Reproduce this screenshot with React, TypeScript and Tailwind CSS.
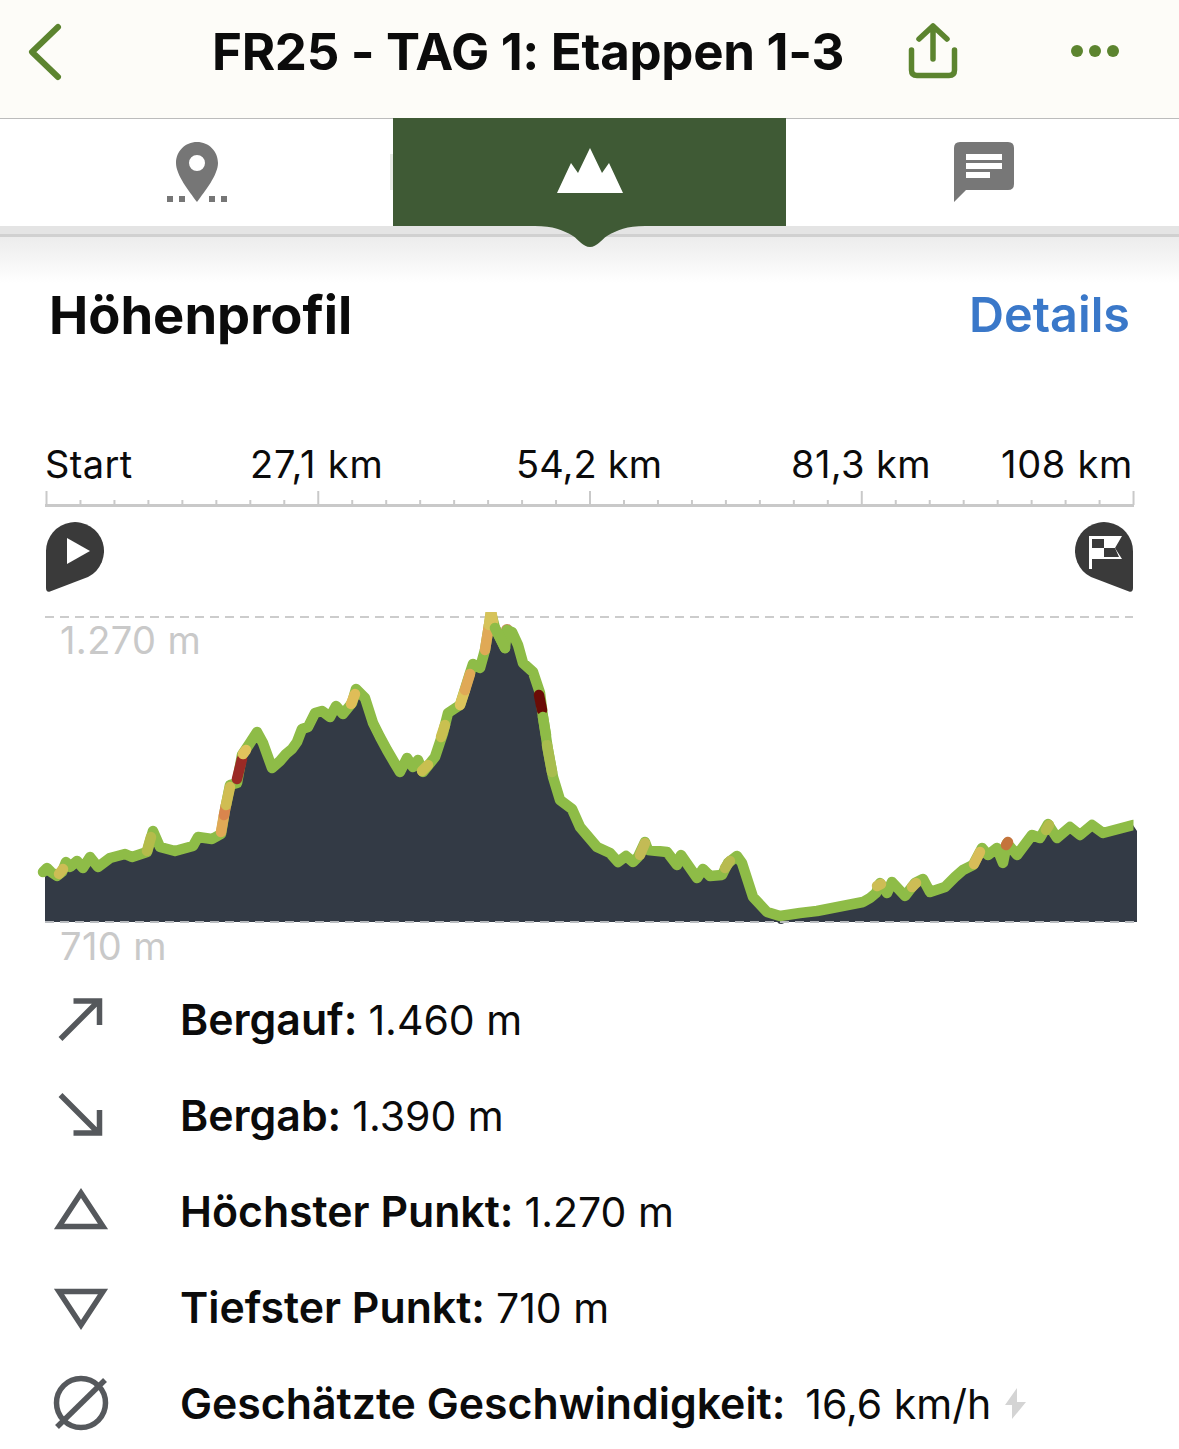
import React from "react";

type Pt = [number, number];

const LINE: Pt[] = [
  [43,872],[47,868],[51,872],[57,876],[62,872],[66,862],[70,867],[77,861],[83,868],[90,857],[98,867],[110,858],[125,854],[132,857],[147,852],[153,831],[160,847],[175,851],[193,846],[198,837],[212,839],[221,834],[225,810],[230,785],[237,783],[242,755],[250,743],[257,732],[263,743],[272,768],[280,761],[286,754],[292,749],[297,742],[302,729],[308,727],[315,713],[322,711],[330,717],[336,706],[343,714],[352,703],[356,689],[365,698],[373,723],[380,737],[387,750],[394,762],[400,772],[407,758],[413,767],[418,760],[423,772],[435,757],[443,733],[448,713],[460,705],[470,673],[473,664],[480,668],[485,650],[491,613],[495,628],[505,648],[507,630],[512,632],[518,645],[523,663],[533,672],[540,693],[543,717],[548,750],[553,777],[560,800],[572,809],[580,827],[597,847],[610,853],[618,862],[626,856],[633,862],[638,857],[645,842],[648,850],[667,852],[677,865],[681,855],[697,878],[703,869],[710,876],[722,875],[728,863],[737,856],[742,863],[753,897],[767,912],[780,916],[800,913],[817,911],[863,902],[870,898],[876,893],[880,883],[887,893],[892,882],[905,896],[915,883],[923,879],[930,892],[945,887],[955,877],[963,870],[973,865],[982,848],[988,855],[997,848],[1003,863],[1007,843],[1017,855],[1032,835],[1040,838],[1048,824],[1057,838],[1070,827],[1080,835],[1092,825],[1103,833],[1133,825],
];

const SEGMENTS: { color: string; pts: Pt[] }[] = [
  { color: "#cdbd55", pts: [[59,874],[63,869]] },
  { color: "#b4bc4b", pts: [[147,851],[151,837]] },
  { color: "#e0a956", pts: [[221,832],[224,815]] },
  { color: "#d9854d", pts: [[224,815],[226,805]] },
  { color: "#d0bd52", pts: [[226,805],[230,787]] },
  { color: "#9b2a25", pts: [[237,779],[242,759]] },
  { color: "#e0c35c", pts: [[243,754],[246,750]] },
  { color: "#dfbd58", pts: [[351,704],[355,694]] },
  { color: "#c9c050", pts: [[422,771],[428,765]] },
  { color: "#c9c050", pts: [[441,737],[445,725]] },
  { color: "#dcc45b", pts: [[460,705],[465,690]] },
  { color: "#e0a956", pts: [[465,690],[470,674]] },
  { color: "#e0a956", pts: [[485,650],[489,625]] },
  { color: "#d6c35a", pts: [[489,625],[491,610],[493,622]] },
  { color: "#6a0c06", pts: [[539,695],[542,710]] },
  { color: "#a8bd4e", pts: [[547,745],[552,772]] },
  { color: "#c3bb55", pts: [[640,855],[645,843]] },
  { color: "#b8bb50", pts: [[725,868],[730,861]] },
  { color: "#cdbd55", pts: [[877,886],[881,884]] },
  { color: "#cdbd55", pts: [[912,887],[916,883]] },
  { color: "#d8bd58", pts: [[974,864],[980,852]] },
  { color: "#c4743c", pts: [[1006,845],[1008,842]] },
  { color: "#b4bc4b", pts: [[1046,830],[1049,825]] },
];

const toPoints = (pts: Pt[]) => pts.map((p) => p.join(",")).join(" ");

const STATS = [
  { label: "Bergauf:", value: "1.460 m", icon: "up" },
  { label: "Bergab:", value: "1.390 m", icon: "down" },
  { label: "Höchster Punkt:", value: "1.270 m", icon: "high" },
  { label: "Tiefster Punkt:", value: "710 m", icon: "low" },
];

const StatIcon = ({ icon }: { icon: string }) => (
  <svg width="60" height="60" viewBox="0 0 60 60" fill="none" stroke="#55585c" strokeWidth="5.5">
    {icon === "up" && <path d="M9.5 49 L47.5 11 M22.5 11 H48.5 V35" />}
    {icon === "down" && <path d="M9.5 9 L47.5 47 M22.5 47 H48.5 V24" />}
    {icon === "high" && <path d="M30 11 L8 44.5 H52 Z" />}
    {icon === "low" && <path d="M8 13.5 H52 L30 47 Z" />}
    {icon === "avg" && (
      <>
        <circle cx="30" cy="29" r="24.5" />
        <path d="M6 53 L54 6" />
      </>
    )}
  </svg>
);

const App = () => {
  return (
    <div className="relative w-[1179px] h-[1449px] overflow-hidden bg-white font-[Inter,sans-serif] text-[#0b0b0b]">
      {/* nav bar */}
      <div className="flex h-[119px] items-start border-b border-[#bcbcbc] bg-[#fdfcf8]">
        <svg className="mt-[22px] ml-[26px] shrink-0" width="40" height="60" viewBox="0 0 40 60" fill="none" stroke="#5c842f" strokeWidth="6" strokeLinecap="round" strokeLinejoin="round">
          <path d="M32 5 L6 30 L32 55" />
        </svg>
        <div className="ml-[146px] mt-[23px] w-[632px] whitespace-nowrap text-center text-[51px] leading-[58px] font-bold tracking-[-0.3px]">
          FR25 - TAG 1: Etappen 1-3
        </div>
        <svg className="mt-[22px] ml-[63px] shrink-0" width="52" height="58" viewBox="0 0 52 58" fill="none" stroke="#5c842f" strokeWidth="5.5" strokeLinecap="round" strokeLinejoin="round">
          <path d="M26 4 V37 M12 17 L26 4 L40 17" />
          <path d="M4.5 28 V48 Q4.5 53.5 10 53.5 H42 Q47.5 53.5 47.5 48 V28" />
        </svg>
        <svg className="mt-[40px] ml-[110px] shrink-0" width="52" height="22" viewBox="0 0 52 22" fill="#5c842f">
          <circle cx="8" cy="11" r="6" />
          <circle cx="26" cy="11" r="6" />
          <circle cx="44" cy="11" r="6" />
        </svg>
      </div>

      {/* tabs */}
      <div className="flex h-[107px]">
        <div className="relative flex w-[393px] items-start justify-center pt-[23px] pl-[1px]">
          <svg width="64" height="60" viewBox="0 0 64 60" fill="#767676">
            <path fillRule="evenodd" d="M32 0 C44 0 53 9.5 53 21 C53 33 40 49 32 60 C24 49 11 33 11 21 C11 9.5 20 0 32 0 Z M32 13 A8 8 0 1 0 32 29 A8 8 0 1 0 32 13 Z" />
            <rect x="2" y="54" width="6" height="6" />
            <rect x="14" y="54" width="6" height="6" />
            <rect x="44" y="54" width="6" height="6" />
            <rect x="56" y="54" width="6" height="6" />
          </svg>
          <div className="absolute right-0 top-[35px] h-[36px] w-[3px] bg-[#e8ebe6]" />
        </div>
        <div className="-mt-px flex h-[108px] w-[393px] items-start justify-center bg-[#3f5a35] pt-[30px]">
          <svg width="66" height="45" viewBox="0 0 66 45" fill="#ffffff">
            <path d="M0 45 L14 15 L21 25 L33 0 L45 25 L52 15 L66 45 Z" />
          </svg>
        </div>
        <div className="flex flex-1 items-start justify-center pt-[23px] pl-[3px]">
          <svg width="60" height="60" viewBox="0 0 60 60" fill="#777777">
            <path d="M6 0 H54 Q60 0 60 6 V42 Q60 48 54 48 H12 L0 60 V6 Q0 0 6 0 Z" />
            <rect x="12" y="12" width="36" height="6" fill="#ffffff" />
            <rect x="12" y="21" width="36" height="6" fill="#ffffff" />
            <rect x="12" y="30" width="24" height="6" fill="#ffffff" />
          </svg>
        </div>
      </div>

      {/* shadow strip under the tabs */}
      <div className="h-[8px] bg-[#e4e4e4]" />
      <div className="h-[3px] bg-[#d0d0d0]" />
      <div className="h-[46px] bg-gradient-to-b from-[#ececec] to-white" />
      <svg className="absolute left-[535px] top-[226px]" width="110" height="21" viewBox="0 0 110 21" fill="#3f5a35">
        <path d="M0 0 H110 C92 0 82 4 72 10 C66 14 62 21 55 21 C48 21 44 14 38 10 C28 4 18 0 0 0 Z" />
      </svg>

      {/* heading */}
      <div className="flex items-center justify-between pl-[49px] pr-[49px] h-[64px]">
        <div className="text-[52.5px] leading-[60px] font-bold">Höhenprofil</div>
        <div className="text-[48.5px] leading-[54px] font-semibold text-[#3a78c9]">Details</div>
      </div>

      {/* axis labels */}
      <div className="mt-[95px] flex h-[44px] items-center pl-[45px] text-[38px] leading-[44px] tracking-[0.4px] whitespace-nowrap">
        <span className="w-[86px]">Start</span>
        <span className="ml-[119px] w-[132px] tracking-[0.8px]">27,1 km</span>
        <span className="ml-[134px] w-[145px] tracking-[0.1px]">54,2 km</span>
        <span className="ml-[130px] w-[139px]">81,3 km</span>
        <span className="ml-[71px] w-[130px] tracking-[0.7px]">108 km</span>
      </div>

      {/* ruler */}
      <svg className="mt-[3px] block" width="1179" height="20" viewBox="0 489 1179 20" stroke="#c9c9c9" fill="none">
        <path d="M45 505.5 H1134" strokeWidth="3" />
        {Array.from({ length: 33 }).map((_, i) => {
          const x = 46.5 + i * 33.97;
          return <path key={i} d={i % 8 === 0 ? `M${x} 491 V505` : `M${x} 500 V505`} strokeWidth="2" />;
        })}
      </svg>

      {/* start and finish markers */}
      <div className="mt-[13px] flex h-[70px] justify-between pl-[46px] pr-[46px]">
        <svg width="58" height="70" viewBox="46 522 58 70">
          <path d="M46 551 A29 29 0 1 1 88 577 L50 591.5 Q46 592.5 46 588 Z" fill="#3a3a3a" />
          <path d="M67 538 L90 551 L67 564 Z" fill="#ffffff" />
        </svg>
        <svg width="58" height="70" viewBox="1075 522 58 70">
          <path d="M1133 551 A29 29 0 1 0 1091 577 L1129 591.5 Q1133 592.5 1133 588 Z" fill="#3a3a3a" />
          <path d="M1089 536 H1122 L1115 548 L1122 559 H1092 V569 H1089 Z" fill="#ffffff" />
          <path d="M1092 539 H1104 V548 H1092 Z M1104 548 H1115 L1119 557 H1104 Z" fill="#3a3a3a" />
        </svg>
      </div>

      {/* elevation chart */}
      <div className="relative mt-[8px] h-[372px]">
        <svg className="block" width="1179" height="372" viewBox="0 600 1179 372" fill="none">
          <path d="M45 617 H1133" stroke="#cccccc" strokeWidth="2" strokeDasharray="9 6" />
          <polygon fill="#333a45" points={`45,922 45,874 ${toPoints(LINE.slice(1))} 1137,831 1137,922`} />
          <circle cx="781" cy="920" r="4" fill="#333a45" />
          <path d="M45 922 H1137" stroke="#b9bcc0" strokeWidth="2" strokeDasharray="9 6" />
          <circle cx="507" cy="630" r="6" fill="#c98a5a" />
          <clipPath id="chart-clip">
            <rect x="0" y="612" width="1133.5" height="320" />
          </clipPath>
          <g clipPath="url(#chart-clip)" strokeLinecap="round" strokeLinejoin="round" strokeWidth="10.5">
            <polyline points={toPoints(LINE)} stroke="#8ebc47" />
            {SEGMENTS.map((s, i) => (
              <polyline key={i} points={toPoints(s.pts)} stroke={s.color} />
            ))}
            <polyline points="495,628 500,638 505,648" stroke="#8ebc47" />
            <polyline points="543,717 546,735" stroke="#8ebc47" />
          </g>
        </svg>
        <span className="absolute left-[60px] top-[18px] text-[38px] leading-[44px] tracking-[0.4px] text-[#c9c9c9]">1.270 m</span>
        <span className="absolute left-[60px] top-[324px] text-[38px] leading-[44px] tracking-[0.4px] text-[#c9c9c9]">710 m</span>
      </div>

      {/* stats */}
      <div className="flex flex-col text-[41px] leading-[48px]">
        {STATS.map((s) => (
          <div key={s.label} className="flex h-[96px] items-center pl-[51px]">
            <div className="w-[129px] shrink-0">
              <StatIcon icon={s.icon} />
            </div>
            <span className="text-[42.8px] font-semibold">{s.label}</span>
            <span className="ml-[11px]">{s.value}</span>
          </div>
        ))}
        <div className="flex h-[96px] items-center pl-[51px]">
          <div className="w-[129px] shrink-0">
            <StatIcon icon="avg" />
          </div>
          <span className="text-[42.8px] font-semibold">Geschätzte Geschwindigkeit:</span>
          <span className="ml-[20px]">16,6 km/h</span>
          <svg className="ml-[14px]" width="22" height="32" viewBox="0 0 22 32" fill="#d4d4d4">
            <path d="M12 0 L0 17 H7 V31 L21 14 H12 Z" />
          </svg>
        </div>
      </div>
    </div>
  );
};

export default App;
